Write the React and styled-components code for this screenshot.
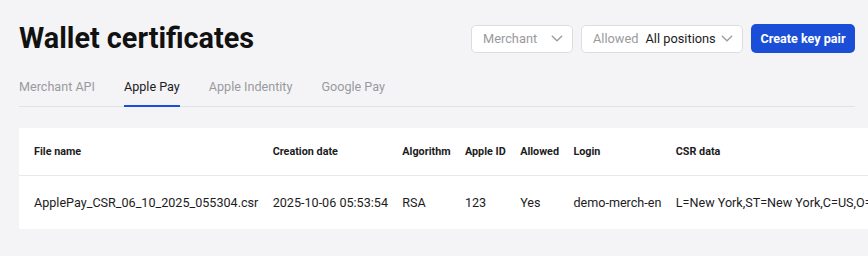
import React from 'react';
import styled, { createGlobalStyle } from 'styled-components';

const GlobalStyle = createGlobalStyle`
  html, body {
    margin: 0;
    padding: 0;
    background: #f4f4f6;
    overflow: hidden;
  }
  body {
    font-family: Roboto, "Liberation Sans", Arial, sans-serif;
    color: #1c1c1e;
  }
`;

const Page = styled.div`
  padding: 24px 13px 0 19px;
`;

const Header = styled.div`
  display: flex;
  align-items: center;
  justify-content: space-between;
  height: 29px;
`;

const Title = styled.h1`
  margin: 0;
  font-size: 28.8px;
  font-weight: 700;
  line-height: 29px;
  color: #111;
  white-space: nowrap;
`;

const Controls = styled.div`
  display: flex;
  align-items: center;
  gap: 8px;
`;

const Select = styled.div`
  display: flex;
  align-items: center;
  box-sizing: border-box;
  width: ${(p) => p.width}px;
  height: 28px;
  padding: 0 9px 0 11px;
  background: #fff;
  border: 1px solid #dcdde1;
  border-radius: 5px;
  font-size: 12.8px;
  white-space: nowrap;
`;

const Placeholder = styled.span`
  color: #9a9a9e;
`;

const Value = styled.span`
  margin-left: 7px;
  color: #1c1c1e;
`;

const Chevron = styled.svg`
  margin-left: auto;
  flex-shrink: 0;
`;

const PrimaryButton = styled.button`
  box-sizing: border-box;
  height: 29px;
  width: 104px;
  padding: 0;
  border: none;
  border-radius: 5px;
  background: #1b4ed6;
  color: #fff;
  font-family: inherit;
  font-size: 12.6px;
  font-weight: 700;
  white-space: nowrap;
`;

const Tabs = styled.div`
  display: flex;
  gap: 29px;
  margin-top: 25px;
  border-bottom: 1px solid #e2e2e6;
`;

const Tab = styled.div`
  padding-bottom: 10px;
  margin-bottom: -1px;
  font-size: 12.6px;
  line-height: 17px;
  color: ${(p) => (p.active ? '#1c1c1e' : '#9a9a9e')};
  border-bottom: 2px solid ${(p) => (p.active ? '#1b4ed6' : 'transparent')};
`;

const Card = styled.div`
  margin-top: 21px;
  width: max-content;
  min-width: 100%;
  background: #fff;
`;

const Table = styled.table`
  border-collapse: collapse;
  white-space: nowrap;
`;

const Th = styled.th`
  height: 47px;
  padding: 0 7.2px;
  text-align: left;
  font-size: 10.8px;
  font-weight: 700;
  color: #1c1c1e;
  border-bottom: 1px solid #e8e8eb;
  &:first-child { padding-left: 15px; }
`;

const Td = styled.td`
  height: 53px;
  padding: 0 7.2px;
  font-size: 12.6px;
  color: #1c1c1e;
  &:first-child { padding-left: 15px; }
`;

const ChevronIcon = () => (
  <Chevron width="12" height="7" viewBox="0 0 12 7">
    <polyline points="0.8,0.8 6,5.8 11.2,0.8" fill="none" stroke="#9a9a9e" strokeWidth="1.2" />
  </Chevron>
);

const columns = ['File name', 'Creation date', 'Algorithm', 'Apple ID', 'Allowed', 'Login', 'CSR data'];

const rows = [
  [
    'ApplePay_CSR_06_10_2025_055304.csr',
    '2025-10-06 05:53:54',
    'RSA',
    '123',
    'Yes',
    'demo-merch-en',
    'L=New York,ST=New York,C=US,O=Demo',
  ],
];

const tabs = ['Merchant API', 'Apple Pay', 'Apple Indentity', 'Google Pay'];

const App = () => (
  <>
    <GlobalStyle />
    <Page>
      <Header>
        <Title>Wallet certificates</Title>
        <Controls>
          <Select width={102}>
            <Placeholder>Merchant</Placeholder>
            <ChevronIcon />
          </Select>
          <Select width={162}>
            <Placeholder>Allowed</Placeholder>
            <Value>All positions</Value>
            <ChevronIcon />
          </Select>
          <PrimaryButton>Create key pair</PrimaryButton>
        </Controls>
      </Header>
      <Tabs>
        {tabs.map((t) => (
          <Tab key={t} active={t === 'Apple Pay'}>{t}</Tab>
        ))}
      </Tabs>
      <Card>
        <Table>
          <thead>
            <tr>
              {columns.map((c) => <Th key={c}>{c}</Th>)}
            </tr>
          </thead>
          <tbody>
            {rows.map((r) => (
              <tr key={r[0]}>
                {r.map((cell, i) => <Td key={columns[i]}>{cell}</Td>)}
              </tr>
            ))}
          </tbody>
        </Table>
      </Card>
    </Page>
  </>
);

export default App;
